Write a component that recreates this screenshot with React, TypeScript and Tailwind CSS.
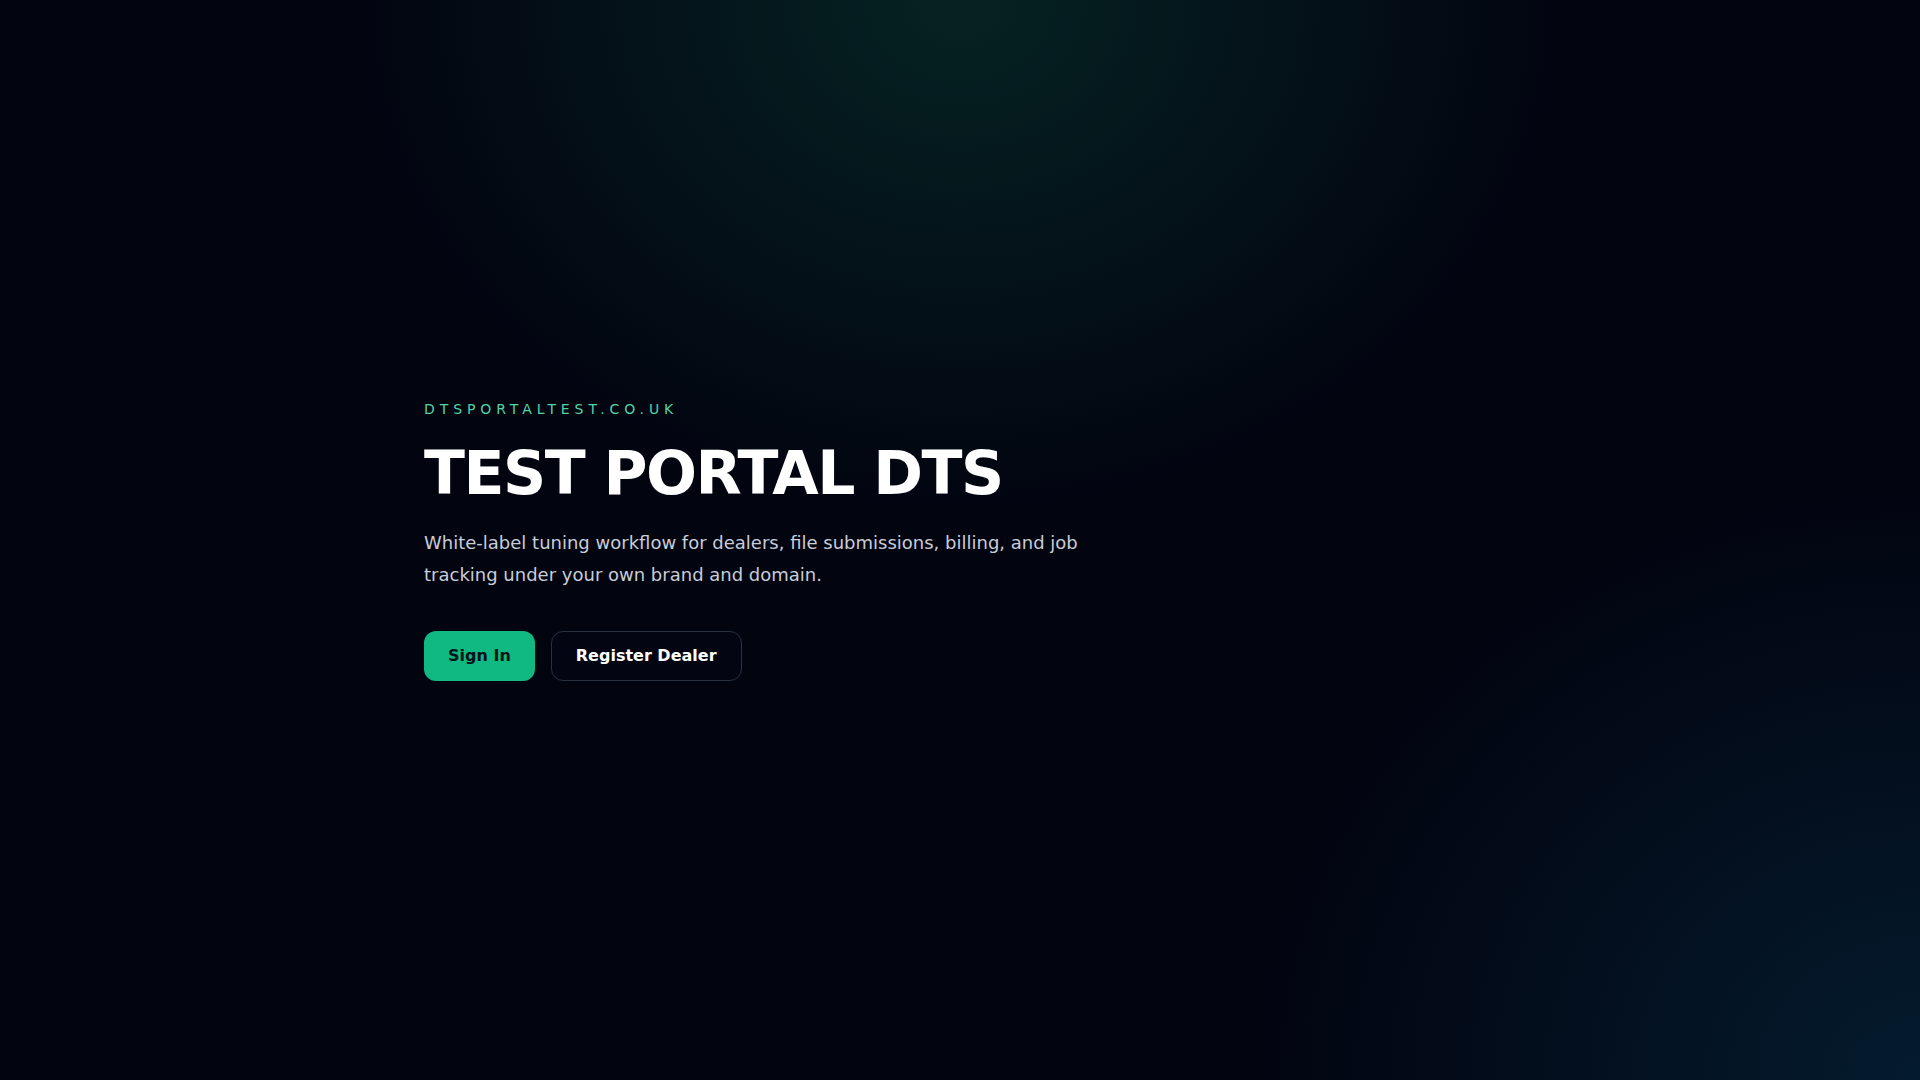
export default function App() {
  return (
    <div
      className="flex min-h-screen items-center bg-[#020410] bg-[radial-gradient(ellipse_32%_48%_at_50%_0%,rgba(16,125,92,0.25),transparent),radial-gradient(ellipse_35%_55%_at_100%_100%,rgba(8,70,100,0.35),transparent)] text-white"
      style={{ fontFamily: '"DejaVu Sans", sans-serif' }}
    >
      <div className="mx-auto w-full max-w-6xl px-10">
        <p className="text-sm uppercase tracking-[0.35em] text-[#52d4a8]">dtsportaltest.co.uk</p>
        <h1 className="mt-6 text-6xl font-bold leading-none tracking-tight text-white">TEST PORTAL DTS</h1>
        <p className="mt-6 max-w-2xl text-lg leading-8 text-[#c8cdd8]">
          White-label tuning workflow for dealers, file submissions, billing, and job tracking under your own brand and
          domain.
        </p>
        <div className="mt-10 flex gap-4">
          <button className="h-[50px] rounded-xl bg-[#10b981] px-6 text-base font-bold text-[#04121a]">Sign In</button>
          <button className="h-[50px] rounded-xl border border-[#2a3140] bg-[#030612] px-6 text-base font-bold text-white">
            Register Dealer
          </button>
        </div>
      </div>
    </div>
  );
}
